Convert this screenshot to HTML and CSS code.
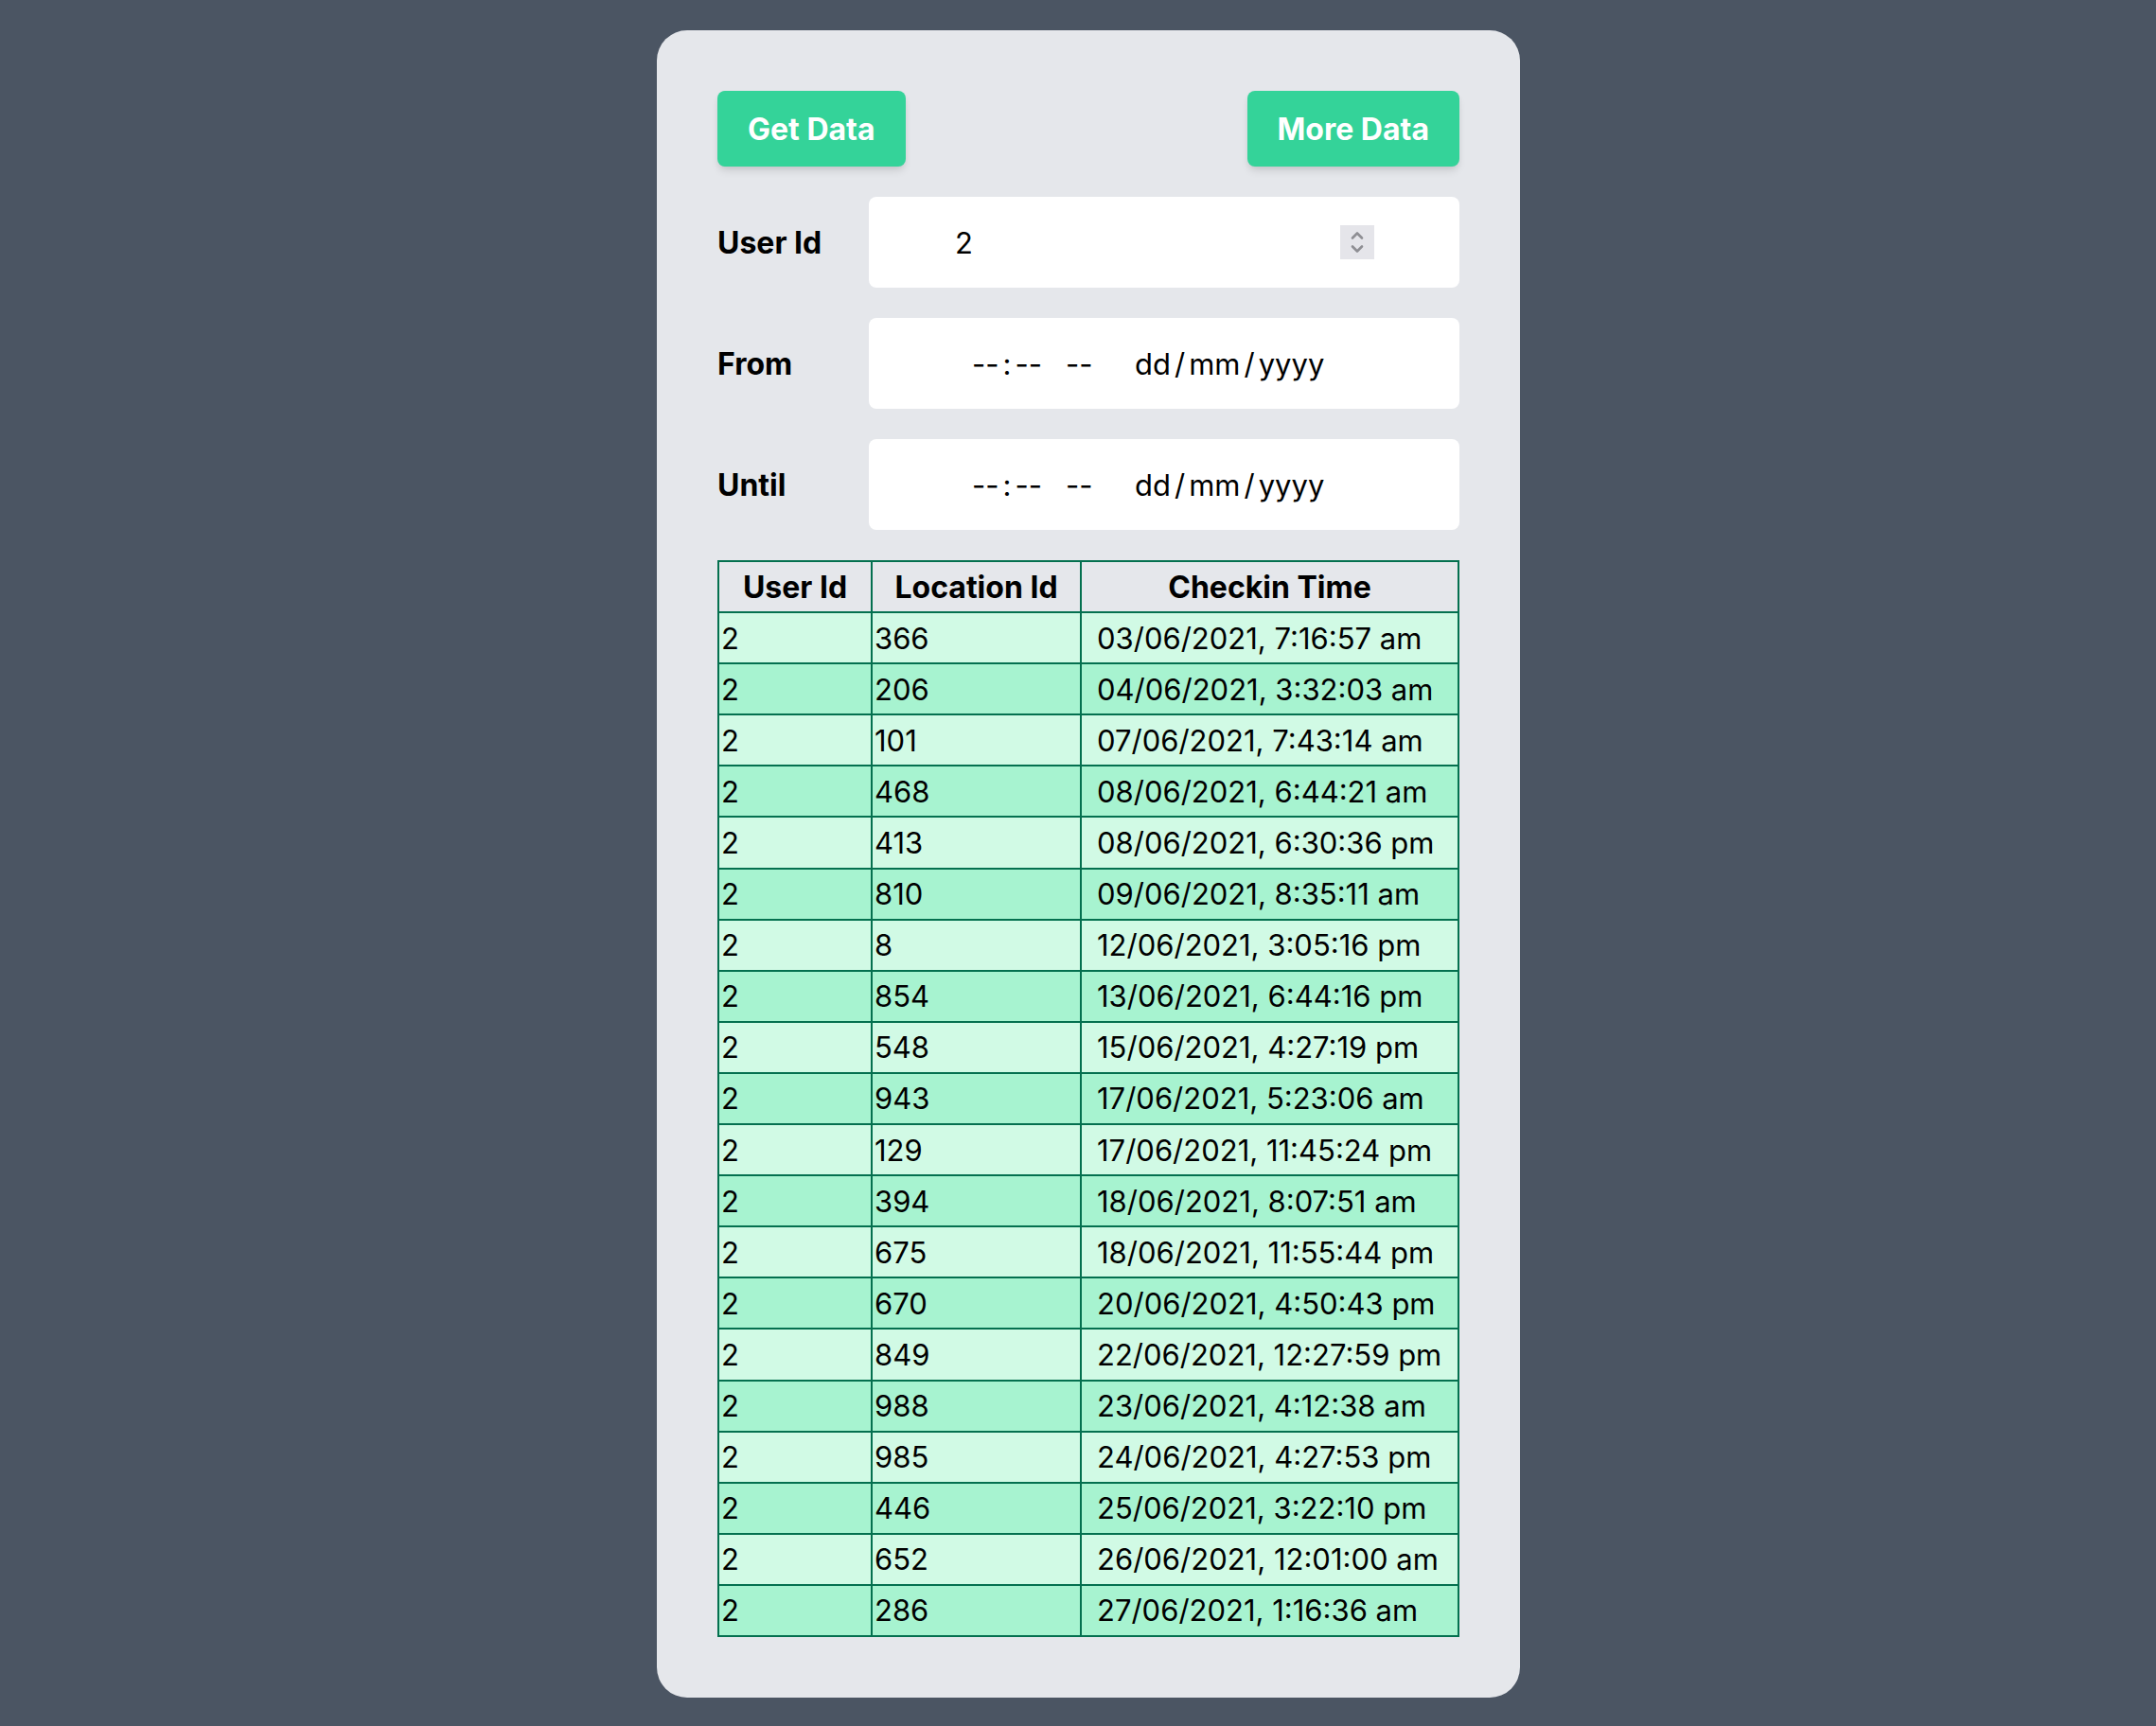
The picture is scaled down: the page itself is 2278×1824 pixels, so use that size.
FILE: index.html
```html
<!DOCTYPE html>
<html lang="en">
<head>
<meta charset="utf-8">
<title>Checkins</title>
<link rel="stylesheet" href="styles.css">
</head>
<body>
<main class="card">
  <div class="actions">
    <button class="btn">Get Data</button>
    <button class="btn">More Data</button>
  </div>
  <div class="field">
    <label class="label">User Id</label>
    <div class="input number">
      <span class="value">2</span>
      <span class="spinner">
        <svg width="36" height="36" viewBox="0 0 36 36"><path d="M13 13.5 L18 8.5 L23 13.5" fill="none" stroke="#8e8e93" stroke-width="2.6" stroke-linecap="round" stroke-linejoin="round"/><path d="M13 22.5 L18 27.5 L23 22.5" fill="none" stroke="#8e8e93" stroke-width="2.6" stroke-linecap="round" stroke-linejoin="round"/></svg>
      </span>
    </div>
  </div>
  <div class="field">
    <label class="label">From</label>
    <div class="input date"><span class="time">--<span class="sep">:</span>--</span><span class="ampm">--</span><span class="day">dd<span class="sep">/</span>mm<span class="sep">/</span>yyyy</span></div>
  </div>
  <div class="field">
    <label class="label">Until</label>
    <div class="input date"><span class="time">--<span class="sep">:</span>--</span><span class="ampm">--</span><span class="day">dd<span class="sep">/</span>mm<span class="sep">/</span>yyyy</span></div>
  </div>
  <table class="checkins">
    <colgroup><col class="c1"><col class="c2"><col class="c3"></colgroup>
    <thead>
      <tr><th>User Id</th><th>Location Id</th><th>Checkin Time</th></tr>
    </thead>
    <tbody>
      <tr><td>2</td><td>366</td><td class="time-cell">03/06/2021, 7:16:57 am</td></tr>
      <tr><td>2</td><td>206</td><td class="time-cell">04/06/2021, 3:32:03 am</td></tr>
      <tr><td>2</td><td>101</td><td class="time-cell">07/06/2021, 7:43:14 am</td></tr>
      <tr><td>2</td><td>468</td><td class="time-cell">08/06/2021, 6:44:21 am</td></tr>
      <tr><td>2</td><td>413</td><td class="time-cell">08/06/2021, 6:30:36 pm</td></tr>
      <tr><td>2</td><td>810</td><td class="time-cell">09/06/2021, 8:35:11 am</td></tr>
      <tr><td>2</td><td>8</td><td class="time-cell">12/06/2021, 3:05:16 pm</td></tr>
      <tr><td>2</td><td>854</td><td class="time-cell">13/06/2021, 6:44:16 pm</td></tr>
      <tr><td>2</td><td>548</td><td class="time-cell">15/06/2021, 4:27:19 pm</td></tr>
      <tr><td>2</td><td>943</td><td class="time-cell">17/06/2021, 5:23:06 am</td></tr>
      <tr><td>2</td><td>129</td><td class="time-cell">17/06/2021, 11:45:24 pm</td></tr>
      <tr><td>2</td><td>394</td><td class="time-cell">18/06/2021, 8:07:51 am</td></tr>
      <tr><td>2</td><td>675</td><td class="time-cell">18/06/2021, 11:55:44 pm</td></tr>
      <tr><td>2</td><td>670</td><td class="time-cell">20/06/2021, 4:50:43 pm</td></tr>
      <tr><td>2</td><td>849</td><td class="time-cell">22/06/2021, 12:27:59 pm</td></tr>
      <tr><td>2</td><td>988</td><td class="time-cell">23/06/2021, 4:12:38 am</td></tr>
      <tr><td>2</td><td>985</td><td class="time-cell">24/06/2021, 4:27:53 pm</td></tr>
      <tr><td>2</td><td>446</td><td class="time-cell">25/06/2021, 3:22:10 pm</td></tr>
      <tr><td>2</td><td>652</td><td class="time-cell">26/06/2021, 12:01:00 am</td></tr>
      <tr><td>2</td><td>286</td><td class="time-cell">27/06/2021, 1:16:36 am</td></tr>
    </tbody>
  </table>
</main>
</body>
</html>
```
FILE: styles.css
```css
* { box-sizing: border-box; }

html, body {
  margin: 0;
  background: #4b5563;
  font-family: Inter, "Noto Sans", "Liberation Sans", sans-serif;
  color: #000;
}

body {
  padding: 32px 672px 32px 694px;
  min-height: 1824px;
}

.card {
  background: #e5e7eb;
  border-radius: 32px;
  padding: 64px;
  display: flex;
  flex-direction: column;
  gap: 32px;
}

.actions {
  display: flex;
  justify-content: space-between;
  align-items: center;
}

.btn {
  height: 80px;
  padding: 0 32px;
  border: none;
  border-radius: 8px;
  background: #34d399;
  color: #fff;
  font-family: inherit;
  font-size: 32px;
  font-weight: 700;
  box-shadow: 0 6px 10px -2px rgba(0, 0, 0, 0.12), 0 2px 6px -2px rgba(0, 0, 0, 0.08);
  cursor: pointer;
}

.field {
  display: grid;
  grid-template-columns: 160px 1fr;
  align-items: center;
}

.label {
  font-size: 32px;
  font-weight: 700;
}

.input {
  height: 96px;
  background: #fff;
  border-radius: 8px;
  display: flex;
  align-items: center;
  font-size: 31px;
}

.number {
  padding: 0 90px 0 91px;
  justify-content: space-between;
}

.spinner {
  width: 36px;
  height: 36px;
  background: #e5e5ea;
  display: flex;
}

.date {
  padding-left: 109px;
}

.date .time { width: 99px; display: inline-flex; }
.date .ampm { width: 73px; }
.date .day { display: inline-flex; }
.date .sep { margin: 0 4px; }

.checkins {
  border-collapse: collapse;
  table-layout: fixed;
  width: 782px;
  border: 2px solid #04704f;
}

.c1 { width: 162px; }
.c2 { width: 221px; }
.c3 { width: 399px; }

.checkins th, .checkins td {
  border: 2px solid #04704f;
  height: 54.1px;
  padding: 0 2px;
  white-space: nowrap;
}

.checkins th {
  font-size: 32px;
  font-weight: 700;
  text-align: center;
  background: #e5e7eb;
}

.checkins td {
  font-size: 31px;
  font-weight: 400;
  text-align: left;
}

.checkins td.time-cell { padding-left: 16px; }

.checkins tbody tr:nth-child(odd) { background: #d1fae5; }
.checkins tbody tr:nth-child(even) { background: #a7f3d0; }
```
